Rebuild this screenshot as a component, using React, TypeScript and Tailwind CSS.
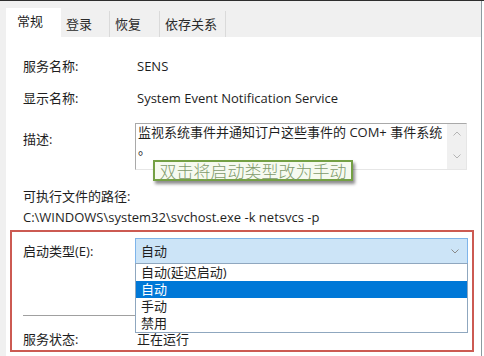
const Chevron = ({ up = false, className = "" }: { up?: boolean; className?: string }) => (
  <svg width="8" height="5" viewBox="0 0 8 5" className={className}>
    <path
      d={up ? "M0.5 4.5 L4 1 L7.5 4.5" : "M0.5 0.5 L4 4 L7.5 0.5"}
      fill="none"
      stroke="currentColor"
      strokeWidth="1"
    />
  </svg>
);

const tabs = [
  { name: "登录", w: "w-[49px]" },
  { name: "恢复", w: "w-[50px]" },
  { name: "依存关系", w: "w-[66px]" },
];

const options = ["自动(延迟启动)", "自动", "手动", "禁用"];

export default function App() {
  return (
    <div className="relative w-[484px] h-[356px] overflow-hidden bg-white flex border-t border-[#2e2e2e] font-['Open_Sans','Noto_Sans_CJK_SC',sans-serif] text-[13px] text-[#1e1e1e]">
      <div className="w-[6px] bg-[#f0f0f0]" />

      <div className="w-[475px] flex flex-col">
        {/* tab strip */}
        <div className="h-[36px] bg-[#f0f0f0] flex items-end">
          <div className="w-[55px] h-[29px] bg-white pl-[11px] pt-[4px] leading-[18px]">常规</div>
          {tabs.map((t) => (
            <div
              key={t.name}
              className={`${t.w} h-[26px] border-r border-[#dadada] pl-[5px] pt-[4px] leading-[18px] text-[#2a2a2a]`}
            >
              {t.name}
            </div>
          ))}
        </div>

        {/* general page */}
        <div className="flex-1 bg-white pt-[20px] leading-[18px]">
          <div className="flex pl-[17px]">
            <div className="w-[114px]">服务名称:</div>
            <div>SENS</div>
          </div>
          <div className="flex pl-[17px] mt-[14px]">
            <div className="w-[114px]">显示名称:</div>
            <div>System Event Notification Service</div>
          </div>
          <div className="flex pl-[17px] mt-[16px]">
            <div className="w-[112px] pt-[7px]">描述:</div>
            <div className="w-[332px] h-[47px] flex border-t border-l border-[#a9a9a9] border-r border-b border-r-[#e6e6e6] border-b-[#e6e6e6]">
              <div className="flex-1 pl-[2px] leading-[17px]">
                监视系统事件并通知订户这些事件的 COM+ 事件系统
                <br />。
              </div>
              <div className="w-[19px] bg-[#f0f0f0] flex flex-col items-center justify-between pt-[7px] pb-[10px] text-[#b4b4b4]">
                <Chevron up />
                <Chevron />
              </div>
            </div>
          </div>
          <div className="pl-[17px] mt-[17px]">可执行文件的路径:</div>
          <div className="pl-[17px] mt-[3px]">C:\WINDOWS\system32\svchost.exe -k netsvcs -p</div>

          {/* highlighted area */}
          <div className="ml-[4px] mt-[4px] w-[464px] border-2 border-[#cc5a52] pb-[2px]">
            <div className="flex items-center pl-[11px] mt-[6px]">
              <div className="w-[112px]">启动类型(E):</div>
              <div className="relative w-[333px] h-[26px] bg-[#cce4f7] border border-[#7eb4ea] flex items-center justify-between pl-[5px] pr-[8px]">
                <span>自动</span>
                <Chevron className="text-[#8a8a8a]" />
                <div className="absolute left-[-1px] top-[24px] w-[333px] h-[70px] z-10 bg-white border border-[#8fa7bf] leading-[17px]">
                  {options.map((o, i) => (
                    <div
                      key={o}
                      className={`h-[17px] pl-[5px] ${i === 1 ? "bg-[#0078d7] text-white" : ""}`}
                    >
                      {o}
                    </div>
                  ))}
                </div>
              </div>
            </div>
            <div className="ml-[11px] mr-[6px] mt-[51px] h-px bg-[#a0a0a0]" />
            <div className="flex pl-[11px] mt-[14px]">
              <div className="w-[114px]">服务状态:</div>
              <div>正在运行</div>
            </div>
          </div>
        </div>
      </div>

      <div className="w-px bg-[#8c9aa0]" />
      <div className="flex-1 bg-white" />

      {/* annotation */}
      <div className="absolute left-[153px] top-[159px] w-[200px] h-[21px] border-2 border-[#74a044] bg-[#f6faf0] shadow-[2px_3px_3px_rgba(0,0,0,0.45)] flex items-center justify-center font-['Noto_Sans_CJK_SC',serif] font-light text-[17px] leading-[17px] text-[#7f9a6c]">
        双击将启动类型改为手动
      </div>
    </div>
  );
}
